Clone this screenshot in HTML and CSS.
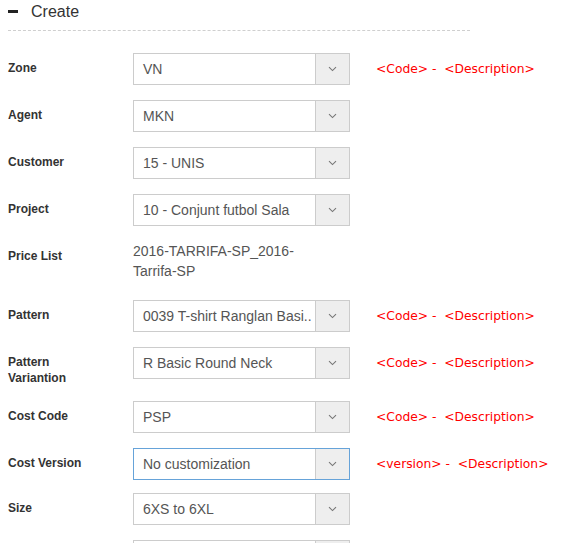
FILE: index.html
```html
<!DOCTYPE html>
<html>
<head>
<meta charset="utf-8">
<link rel="stylesheet" href="styles.css">
</head>
<body>
<div class="panel">
  <div class="panel-head"><span class="minus"></span><span class="title">Create</span></div>
  <div class="form">
    <div class="row">
      <div class="lbl">Zone</div>
      <div class="ctrl"><div class="select"><span class="val">VN</span><span class="addon"><svg width="9" height="6" viewBox="0 0 9 6"><path d="M1 1.2 L4.5 4.6 L8 1.2" fill="none" stroke="#777" stroke-width="1.1"/></svg></span></div></div>
      <div class="hint">&lt;Code&gt; - &nbsp;&lt;Description&gt;</div>
    </div>
    <div class="row">
      <div class="lbl">Agent</div>
      <div class="ctrl"><div class="select"><span class="val">MKN</span><span class="addon"><svg width="9" height="6" viewBox="0 0 9 6"><path d="M1 1.2 L4.5 4.6 L8 1.2" fill="none" stroke="#777" stroke-width="1.1"/></svg></span></div></div>
    </div>
    <div class="row">
      <div class="lbl">Customer</div>
      <div class="ctrl"><div class="select"><span class="val">15 - UNIS</span><span class="addon"><svg width="9" height="6" viewBox="0 0 9 6"><path d="M1 1.2 L4.5 4.6 L8 1.2" fill="none" stroke="#777" stroke-width="1.1"/></svg></span></div></div>
    </div>
    <div class="row">
      <div class="lbl">Project</div>
      <div class="ctrl"><div class="select"><span class="val">10 - Conjunt futbol Sala</span><span class="addon"><svg width="9" height="6" viewBox="0 0 9 6"><path d="M1 1.2 L4.5 4.6 L8 1.2" fill="none" stroke="#777" stroke-width="1.1"/></svg></span></div></div>
    </div>
    <div class="row row-static">
      <div class="lbl">Price List</div>
      <div class="ctrl"><div class="static">2016-TARRIFA-SP_2016-<br>Tarrifa-SP</div></div>
    </div>
    <div class="row">
      <div class="lbl">Pattern</div>
      <div class="ctrl"><div class="select"><span class="val">0039 T-shirt Ranglan Basi..</span><span class="addon"><svg width="9" height="6" viewBox="0 0 9 6"><path d="M1 1.2 L4.5 4.6 L8 1.2" fill="none" stroke="#777" stroke-width="1.1"/></svg></span></div></div>
      <div class="hint">&lt;Code&gt; - &nbsp;&lt;Description&gt;</div>
    </div>
    <div class="row">
      <div class="lbl">Pattern<br>Variantion</div>
      <div class="ctrl"><div class="select"><span class="val">R Basic Round Neck</span><span class="addon"><svg width="9" height="6" viewBox="0 0 9 6"><path d="M1 1.2 L4.5 4.6 L8 1.2" fill="none" stroke="#777" stroke-width="1.1"/></svg></span></div></div>
      <div class="hint">&lt;Code&gt; - &nbsp;&lt;Description&gt;</div>
    </div>
    <div class="row">
      <div class="lbl">Cost Code</div>
      <div class="ctrl"><div class="select"><span class="val">PSP</span><span class="addon"><svg width="9" height="6" viewBox="0 0 9 6"><path d="M1 1.2 L4.5 4.6 L8 1.2" fill="none" stroke="#777" stroke-width="1.1"/></svg></span></div></div>
      <div class="hint">&lt;Code&gt; - &nbsp;&lt;Description&gt;</div>
    </div>
    <div class="row row-cv">
      <div class="lbl">Cost Version</div>
      <div class="ctrl"><div class="select focus"><span class="val">No customization</span><span class="addon"><svg width="9" height="6" viewBox="0 0 9 6"><path d="M1 1.2 L4.5 4.6 L8 1.2" fill="none" stroke="#777" stroke-width="1.1"/></svg></span></div></div>
      <div class="hint">&lt;version&gt; - &nbsp;&lt;Description&gt;</div>
    </div>
    <div class="row">
      <div class="lbl">Size</div>
      <div class="ctrl"><div class="select"><span class="val">6XS to 6XL</span><span class="addon"><svg width="9" height="6" viewBox="0 0 9 6"><path d="M1 1.2 L4.5 4.6 L8 1.2" fill="none" stroke="#777" stroke-width="1.1"/></svg></span></div></div>
    </div>
    <div class="row">
      <div class="lbl">&nbsp;</div>
      <div class="ctrl"><div class="select"><span class="val">&nbsp;</span><span class="addon"></span></div></div>
    </div>
  </div>
</div>
</body>
</html>
```

FILE: styles.css
```css
html, body {
  margin: 0;
  padding: 0;
  background: #fff;
  overflow: hidden;
}
body {
  font-family: "Liberation Sans", Arial, sans-serif;
  color: #333;
}
.panel {
  padding: 0 0 0 8px;
}
.panel-head {
  width: 462px;
  height: 31px;
  border-bottom: 1px dashed #cfcfcf;
  display: flex;
  align-items: center;
  box-sizing: border-box;
}
.minus {
  display: inline-block;
  width: 10px;
  height: 3px;
  background: #222;
  margin-top: -8px;
  margin-right: 13px;
}
.title {
  font-size: 16px;
  color: #333;
  line-height: 18px;
  margin-top: -7px;
}
.form {
  padding-top: 22px;
}
.row {
  display: flex;
  align-items: flex-start;
  margin-bottom: 15px;
}
.row-static {
  margin-bottom: 19px;
}
.row-cv {
  margin-top: 1px;
  margin-bottom: 13px;
}
.lbl {
  width: 125px;
  flex: none;
  font-size: 12px;
  font-weight: bold;
  line-height: 16px;
  padding-top: 7px;
  color: #333;
}
.ctrl {
  width: 217px;
  flex: none;
}
.select {
  display: flex;
  height: 32px;
  border: 1px solid #ccc;
  box-sizing: border-box;
  background: #fff;
}
.select.focus {
  border-color: #66a3d9;
}
.val {
  flex: 1;
  min-width: 0;
  padding-left: 9px;
  font-size: 14px;
  line-height: 30px;
  color: #555;
  white-space: nowrap;
  overflow: hidden;
}
.addon {
  width: 33px;
  flex: none;
  background: #eee;
  border-left: 1px solid #ccc;
  display: flex;
  align-items: center;
  justify-content: center;
}
.static {
  font-size: 14px;
  line-height: 20px;
  color: #555;
}
.hint {
  margin-left: 26px;
  padding-top: 8px;
  font-family: "DejaVu Sans", Verdana, sans-serif;
  font-size: 12.3px;
  line-height: 16px;
  color: #f00;
  white-space: nowrap;
}
```
